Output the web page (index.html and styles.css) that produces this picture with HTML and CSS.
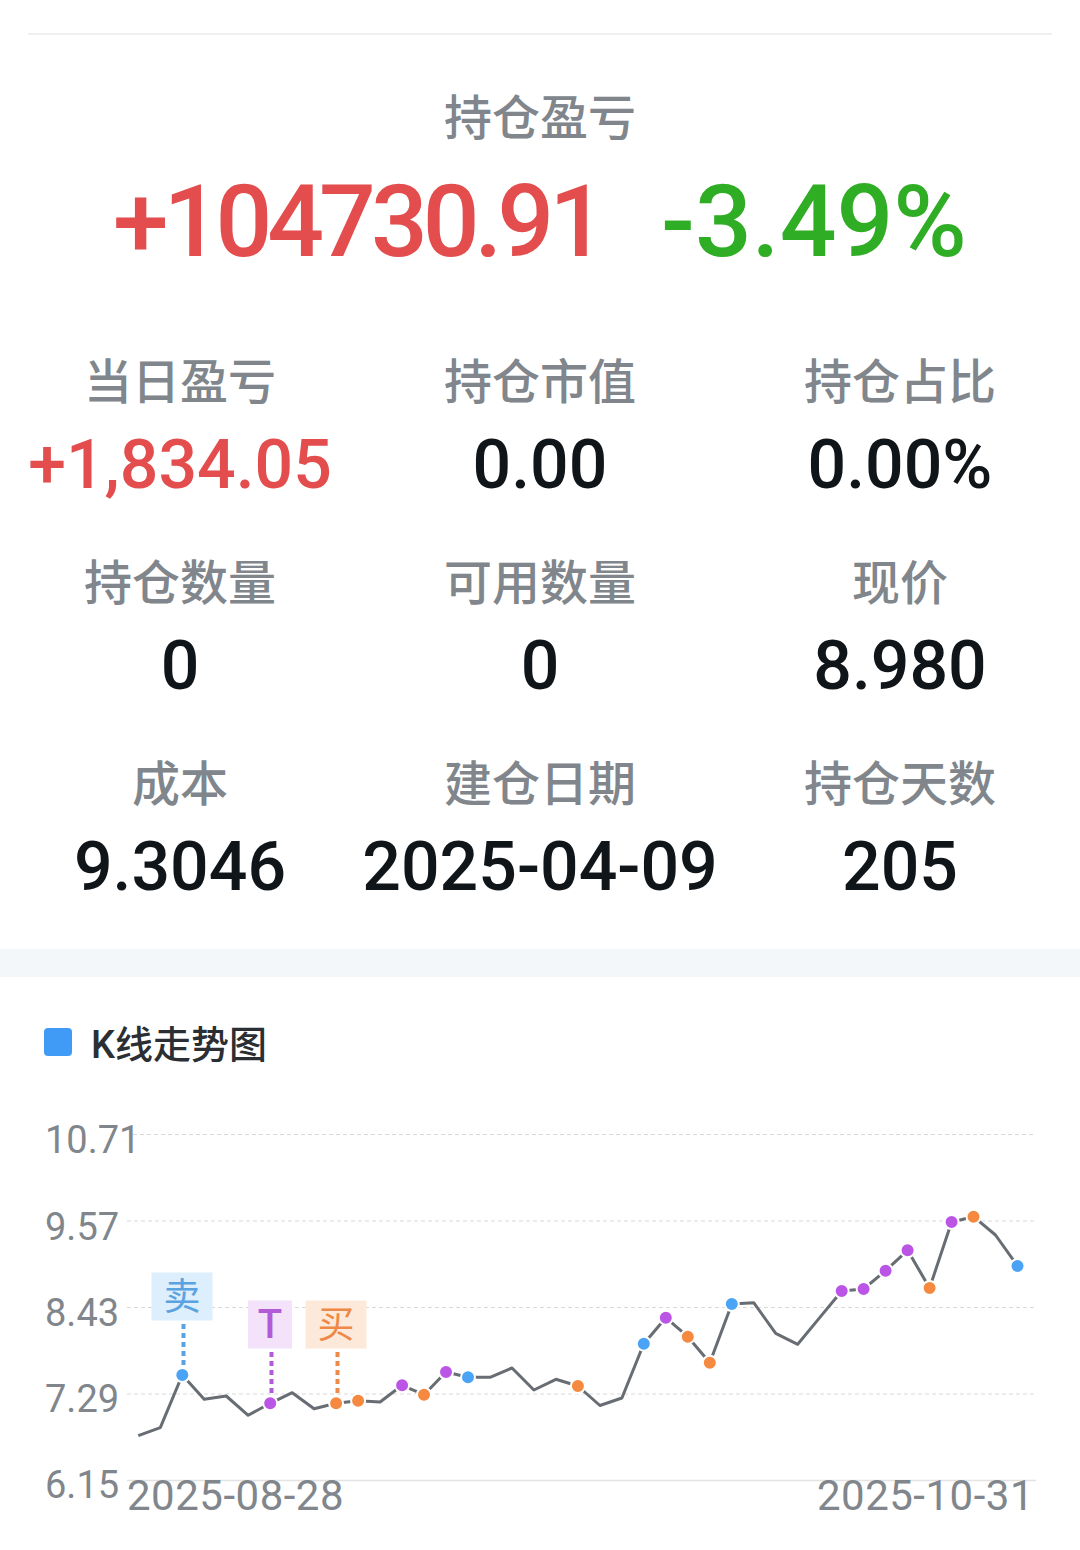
FILE: index.html
```html
<!DOCTYPE html>
<html lang="zh-CN">
<head>
    <meta charset="UTF-8">
    <meta name="viewport" content="width=device-width, initial-scale=1.0">
    <title>持仓详情</title>
    <link rel="stylesheet" href="styles.css">
</head>
<body>

    <section class="summary">
        <div class="divider"></div>
        <div class="summary-title">持仓盈亏</div>
        <div class="total">
            <span class="total-amount up">+104730.91</span>
            <span class="total-rate down">-3.49%</span>
        </div>

        <div class="stats">
            <div class="stat">
                <div class="stat-label">当日盈亏</div>
                <div class="stat-value up">+1,834.05</div>
            </div>
            <div class="stat">
                <div class="stat-label">持仓市值</div>
                <div class="stat-value">0.00</div>
            </div>
            <div class="stat">
                <div class="stat-label">持仓占比</div>
                <div class="stat-value">0.00%</div>
            </div>
            <div class="stat">
                <div class="stat-label">持仓数量</div>
                <div class="stat-value">0</div>
            </div>
            <div class="stat">
                <div class="stat-label">可用数量</div>
                <div class="stat-value">0</div>
            </div>
            <div class="stat">
                <div class="stat-label">现价</div>
                <div class="stat-value">8.980</div>
            </div>
            <div class="stat">
                <div class="stat-label">成本</div>
                <div class="stat-value">9.3046</div>
            </div>
            <div class="stat">
                <div class="stat-label">建仓日期</div>
                <div class="stat-value">2025-04-09</div>
            </div>
            <div class="stat">
                <div class="stat-label">持仓天数</div>
                <div class="stat-value">205</div>
            </div>
        </div>
    </section>

    <div class="band"></div>

    <section class="chart-card">
        <div class="legend">
            <span class="legend-mark"></span>
            <span class="legend-text">K线走势图</span>
        </div>

        <svg class="chart" width="1080" height="460" viewBox="0 1090 1080 460">
            <!-- grid -->
            <line class="grid" x1="133" y1="1134.5" x2="1036" y2="1134.5"/>
            <line class="grid" x1="127" y1="1221" x2="1036" y2="1221"/>
            <line class="grid" x1="127" y1="1307.5" x2="1036" y2="1307.5"/>
            <line class="grid" x1="127" y1="1394" x2="1036" y2="1394"/>
            <line class="axis" x1="127" y1="1480.5" x2="1036" y2="1480.5"/>

            <text class="y-label" x="45" y="1152.5">10.71</text>
            <text class="y-label" x="45" y="1239.5">9.57</text>
            <text class="y-label" x="45" y="1325.5">8.43</text>
            <text class="y-label" x="45" y="1412">7.29</text>
            <text class="y-label" x="45" y="1498">6.15</text>

            <text class="x-label" x="127" y="1510">2025-08-28</text>
            <text class="x-label" x="1034" y="1510" text-anchor="end">2025-10-31</text>

            <!-- trade tags -->
            <line class="stem stem-sell" x1="183.5" y1="1324" x2="183.5" y2="1368"/>
            <line class="stem stem-t" x1="271.5" y1="1352" x2="271.5" y2="1396"/>
            <line class="stem stem-buy" x1="337.5" y1="1352" x2="337.5" y2="1396"/>

            <rect class="tag-sell" x="151.5" y="1272.5" width="61" height="48"/>
            <text class="tag-text sell-text" x="182" y="1310">卖</text>
            <rect class="tag-t" x="248" y="1300.5" width="44" height="48"/>
            <text class="tag-text t-text" x="270" y="1338">T</text>
            <rect class="tag-buy" x="305.5" y="1300.5" width="61" height="48"/>
            <text class="tag-text buy-text" x="336" y="1338">买</text>

            <!-- price line -->
            <polyline class="price" points="138.3,1435.7 160.3,1427.7 182.3,1375 204.2,1399.3 226.2,1396 248.2,1415.3 270.2,1403.3 292.2,1392.7 314.1,1408.7 336.1,1403.3 358.1,1400.7 380.1,1402 402.1,1385.3 424,1394.7 446,1372 468,1377.3 490,1377.3 512,1368 533.9,1390 555.9,1379.3 577.9,1386 599.9,1405.5 621.9,1398 643.8,1343.7 665.8,1317.7 687.8,1336.7 709.8,1362.7 731.8,1304 753.7,1302.7 775.7,1333.3 797.7,1344.3 819.7,1317.6 841.7,1291 863.6,1289 885.6,1270.7 907.6,1250.3 929.6,1288 951.6,1222 973.5,1216.7 995.5,1235 1017.5,1266"/>

            <!-- trade points -->
            <circle class="dot dot-sell" cx="182.3" cy="1375" r="7"/>
            <circle class="dot dot-t" cx="270.2" cy="1403.3" r="7"/>
            <circle class="dot dot-buy" cx="336.1" cy="1403.3" r="7"/>
            <circle class="dot dot-buy" cx="358.1" cy="1400.7" r="7"/>
            <circle class="dot dot-t" cx="402.1" cy="1385.3" r="7"/>
            <circle class="dot dot-buy" cx="424" cy="1394.7" r="7"/>
            <circle class="dot dot-t" cx="446" cy="1372" r="7"/>
            <circle class="dot dot-sell" cx="468" cy="1377.3" r="7"/>
            <circle class="dot dot-buy" cx="577.9" cy="1386" r="7"/>
            <circle class="dot dot-sell" cx="643.8" cy="1343.7" r="7"/>
            <circle class="dot dot-t" cx="665.8" cy="1317.7" r="7"/>
            <circle class="dot dot-buy" cx="687.8" cy="1336.7" r="7"/>
            <circle class="dot dot-buy" cx="709.8" cy="1362.7" r="7"/>
            <circle class="dot dot-sell" cx="731.8" cy="1304" r="7"/>
            <circle class="dot dot-t" cx="841.7" cy="1291" r="7"/>
            <circle class="dot dot-t" cx="863.6" cy="1289" r="7"/>
            <circle class="dot dot-t" cx="885.6" cy="1270.7" r="7"/>
            <circle class="dot dot-t" cx="907.6" cy="1250.3" r="7"/>
            <circle class="dot dot-buy" cx="929.6" cy="1288" r="7"/>
            <circle class="dot dot-t" cx="951.6" cy="1222" r="7"/>
            <circle class="dot dot-buy" cx="973.5" cy="1216.7" r="7"/>
            <circle class="dot dot-sell" cx="1017.5" cy="1266" r="7"/>
        </svg>
    </section>

</body>
</html>
```

FILE: styles.css
```css
body {
    margin: 0;
    background-color: #fff;
    font-family: Roboto, "Noto Sans CJK SC", sans-serif;
    color: #10151a;
}

.summary {
    padding: 33px 0 42px;
}

.divider {
    height: 2px;
    margin: 0 28px;
    background-color: #eef0f2;
}

.summary-title {
    margin-top: 54px;
    font-size: 48px;
    line-height: 60px;
    font-weight: 500;
    color: #80868b;
    text-align: center;
}

.total {
    display: flex;
    justify-content: center;
    gap: 60px;
    margin-top: 18px;
    font-size: 100px;
    line-height: 110px;
    font-weight: 500;
}

.total-amount {
    letter-spacing: -5px;
}

.up {
    color: #e34d4d;
}

.down {
    color: #2fad24;
}

.stats {
    display: grid;
    grid-template-columns: repeat(3, 1fr);
    row-gap: 49px;
    margin-top: 76px;
    text-align: center;
}

.stat-label {
    font-size: 48px;
    line-height: 60px;
    font-weight: 500;
    color: #80868b;
}

.stat-value {
    margin-top: 12px;
    font-size: 68px;
    line-height: 80px;
    font-weight: 500;
}

.band {
    height: 28px;
    background-color: #f4f7fa;
}

.chart-card {
    padding-top: 44px;
}

.legend {
    display: flex;
    align-items: center;
    gap: 19px;
    padding-left: 44px;
    height: 41px;
}

.legend-mark {
    width: 28px;
    height: 28px;
    border-radius: 4px;
    background-color: #3f9bf6;
}

.legend-text {
    font-size: 38px;
    font-weight: 500;
    color: #2b2f33;
}

.chart {
    display: block;
    margin-top: 28px;
}

.grid {
    stroke: #d9d9d9;
    stroke-width: 1.2;
    stroke-dasharray: 4 3;
}

.axis {
    stroke: #e3e3e3;
    stroke-width: 1.5;
}

.y-label {
    font-size: 38px;
    fill: #80868b;
}

.x-label {
    font-size: 42px;
    letter-spacing: 0.5px;
    fill: #80868b;
}

.price {
    fill: none;
    stroke: #676d72;
    stroke-width: 3;
    stroke-linejoin: round;
}

.dot {
    stroke: #fff;
    stroke-width: 2;
}

.dot-sell {
    fill: #4aa3f5;
}

.dot-t {
    fill: #bb55e6;
}

.dot-buy {
    fill: #f5893f;
}

.stem {
    stroke-width: 4;
    stroke-dasharray: 5 4;
}

.stem-sell {
    stroke: #5ba3e0;
}

.stem-t {
    stroke: #b25bd6;
}

.stem-buy {
    stroke: #ee8a48;
}

.tag-sell {
    fill: #ddeefc;
}

.tag-t {
    fill: #f4e2fb;
}

.tag-buy {
    fill: #fde9da;
}

.tag-text {
    font-size: 37px;
    text-anchor: middle;
}

.sell-text {
    fill: #5ba3e0;
}

.t-text {
    font-size: 40px;
    font-weight: 500;
    fill: #b25bd6;
}

.buy-text {
    fill: #ee8a48;
}
```
